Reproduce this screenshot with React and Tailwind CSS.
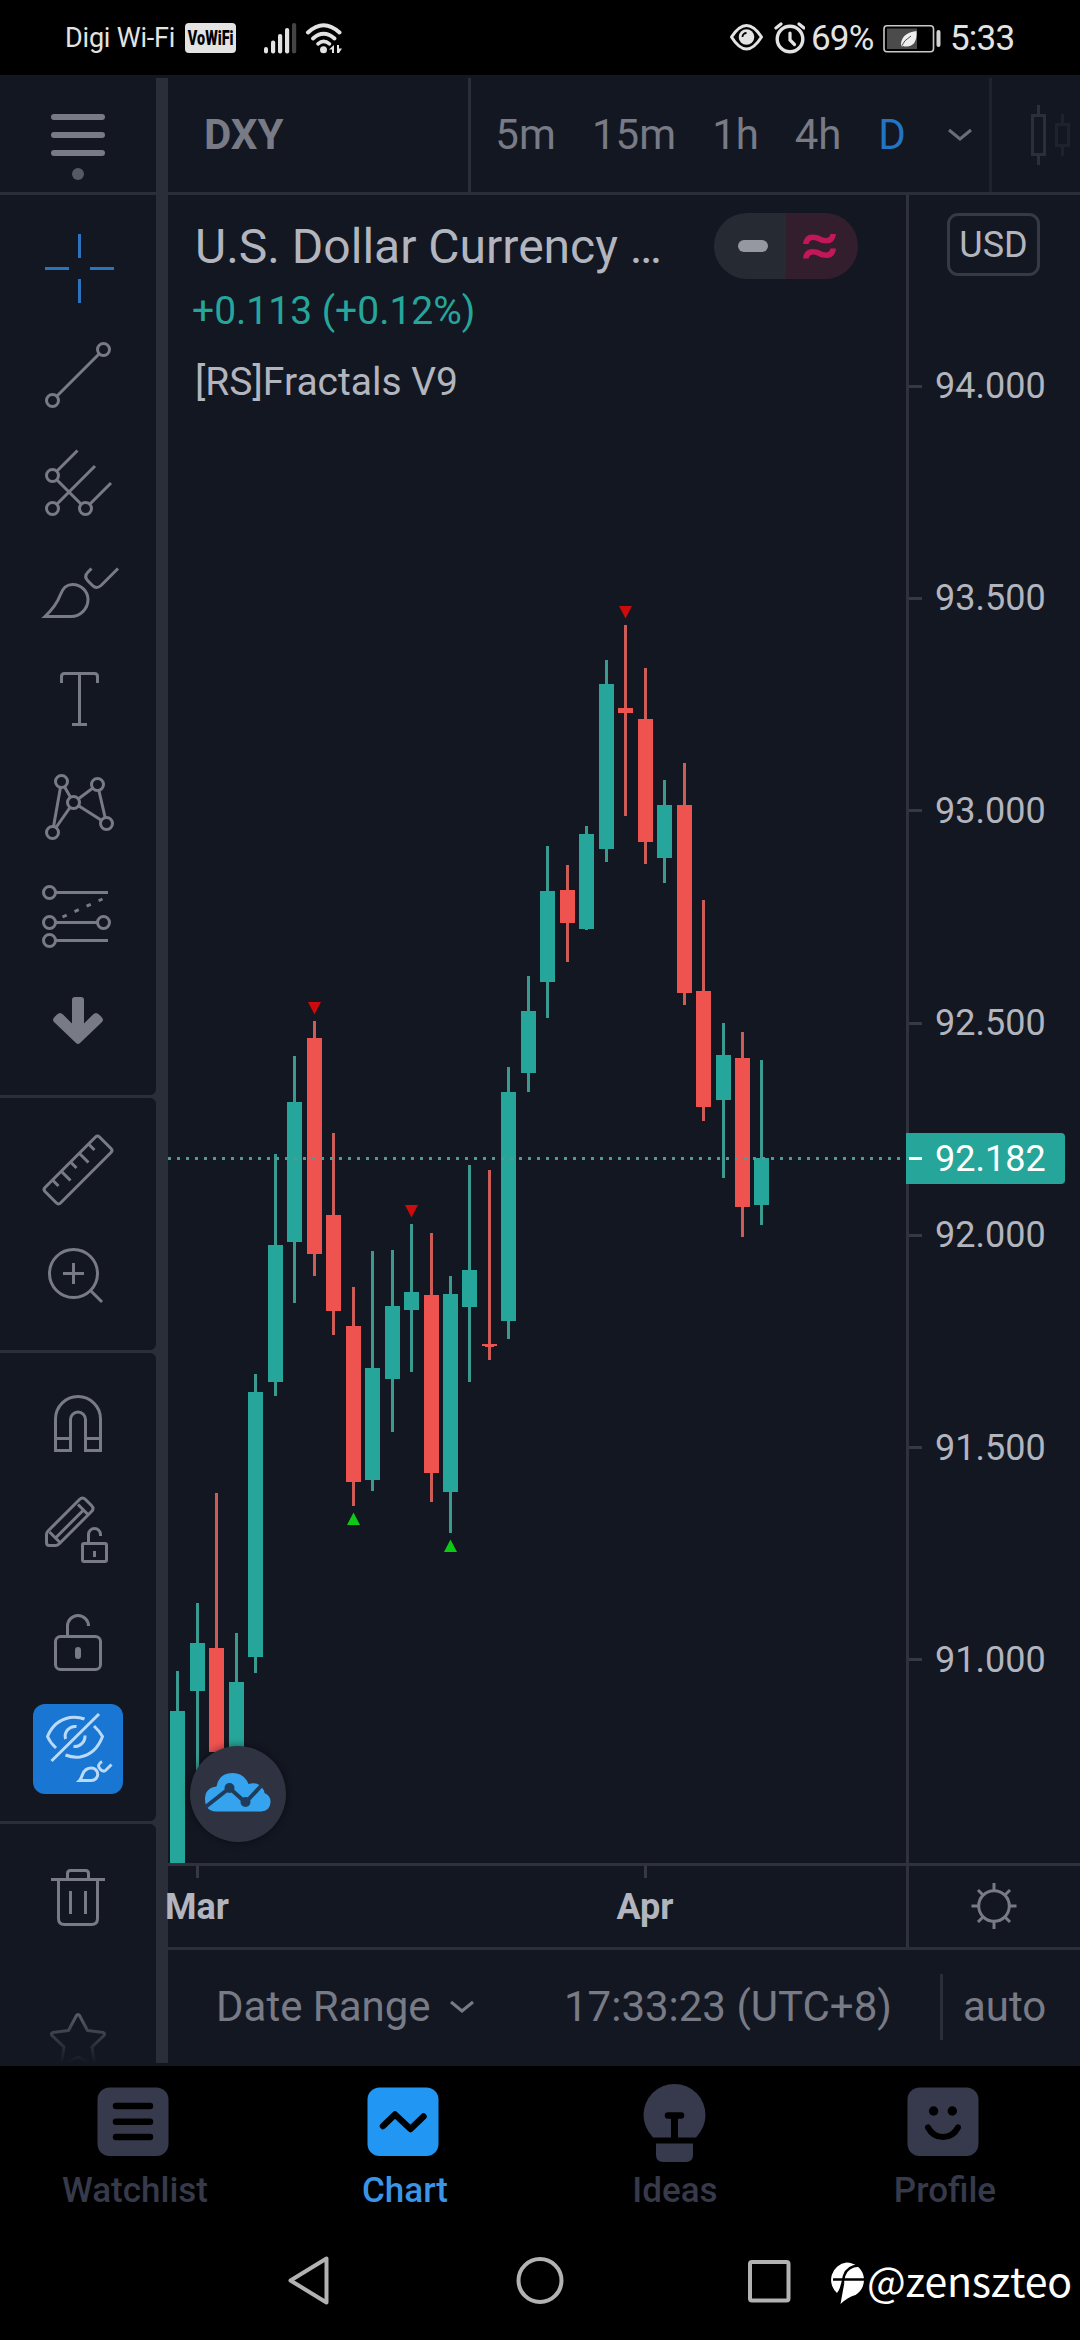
import React from "react";

const UP = "#26a69a";
const DOWN = "#ef5350";
const UP_WICK = "#3a9a90";
const DOWN_WICK = "#cd5c57";

// [body left, high, body top, body bottom, low, direction]
const CANDLES = [
  [170, 1671, 1711, 1863, 1863, 1],
  [190, 1603, 1643, 1691, 1800, 1],
  [209, 1493, 1648, 1752, 1752, 0],
  [229, 1633, 1682, 1790, 1790, 1],
  [248, 1374, 1392, 1657, 1673, 1],
  [268, 1154, 1245, 1382, 1396, 1],
  [287, 1056, 1102, 1242, 1303, 1],
  [307, 1021, 1038, 1254, 1276, 0],
  [326, 1133, 1215, 1311, 1335, 0],
  [346, 1287, 1326, 1482, 1506, 0],
  [365, 1251, 1368, 1480, 1491, 1],
  [385, 1250, 1306, 1379, 1432, 1],
  [404, 1224, 1292, 1310, 1372, 1],
  [424, 1233, 1295, 1473, 1502, 0],
  [443, 1276, 1294, 1492, 1533, 1],
  [462, 1165, 1270, 1307, 1382, 1],
  [482, 1170, 1344, 1346, 1360, 0],
  [501, 1067, 1092, 1321, 1339, 1],
  [521, 976, 1011, 1073, 1092, 1],
  [540, 846, 891, 982, 1018, 1],
  [560, 865, 890, 923, 962, 0],
  [579, 826, 834, 929, 930, 1],
  [599, 660, 684, 849, 862, 1],
  [618, 625, 708, 713, 816, 0],
  [638, 668, 719, 842, 864, 0],
  [657, 780, 805, 858, 883, 1],
  [677, 763, 805, 993, 1005, 0],
  [696, 900, 991, 1107, 1121, 0],
  [716, 1023, 1055, 1100, 1178, 1],
  [735, 1032, 1058, 1207, 1237, 0],
  [754, 1060, 1158, 1205, 1225, 1],
];

const PRICES = ["94.000", "93.500", "93.000", "92.500", "92.000", "91.500", "91.000"];

// A toolbar drawing; y and h give the slice of the toolbar it fills.
function Tool({ y, h, color = "#787b86", children }) {
  return (
    <svg
      className="block shrink-0"
      width="156"
      height={h}
      viewBox={`0 ${y} 156 ${h}`}
      fill="none"
      stroke={color}
      strokeWidth="3"
    >
      {children}
    </svg>
  );
}

function Node({ x, y }) {
  return <circle cx={x} cy={y} r="6" fill="#131722" />;
}

function StatusBar() {
  return (
    <div className="flex h-[75px] shrink-0 bg-black text-[#e3e3e3]">
      <div className="flex h-[75px] items-center pl-[65px]">
        <span className="relative top-px w-[120px] whitespace-nowrap text-[27px] leading-none tracking-[-0.2px]">Digi Wi-Fi</span>
        <span className="relative top-[0.5px] flex h-[30px] w-[51px] items-center justify-center rounded-[4px] bg-[#e3e3e3]">
          <span className="scale-x-[0.72] text-[20px] font-black leading-none text-black">VoWiFi</span>
        </span>
        <svg className="ml-[27px]" width="34" height="34" viewBox="263 20 34 34" fill="#e3e3e3">
          <rect x="264" y="46" width="4" height="6.5" rx="2" />
          <rect x="271" y="39.5" width="4.2" height="13" rx="2" />
          <rect x="278" y="33" width="4.2" height="19.5" rx="2" />
          <rect x="285" y="27" width="4.2" height="25.5" rx="2" />
          <rect x="292" y="22" width="4.2" height="30.5" rx="2" fill="#444" />
        </svg>
        <svg className="ml-[7px]" width="42" height="34" viewBox="304 20 42 34" fill="none" stroke="#e3e3e3" strokeWidth="4" strokeLinecap="round">
          <path d="M308 31.500Q323.500 17 339.500 31.500" />
          <path d="M313 37.500Q323.500 28 334.500 37.500" />
          <path d="M318 42.800Q323.500 38 329.500 42.800" strokeWidth="3.600" />
          <circle cx="323.500" cy="48.700" r="3.500" fill="#e3e3e3" stroke="none" />
          <path d="M334 44v8h-2v-3.500h-3zM337 44v8h2l3-4.500h-3v-3.500z" fill="#e3e3e3" stroke="none" />
        </svg>
      </div>
      <div className="ml-auto flex h-[75px] items-center pr-[64px]">
        <svg width="76" height="36" viewBox="729 20 76 36" fill="none" stroke="#e3e3e3">
          <path d="M731.500 37Q739 25.500 746.500 25.500T761.500 37Q754 49 746.500 49T731.500 37z" strokeWidth="3" strokeLinejoin="round" />
          <circle cx="746.500" cy="37" r="7.800" fill="#e3e3e3" stroke="none" />
          <path d="M742.500 37a4 4 0 0 1 4-4" stroke="#000" strokeWidth="1.800" />
          <circle cx="790" cy="39" r="12.800" strokeWidth="3.400" />
          <path d="M790 33v7l4.500 4.500" strokeWidth="3.200" strokeLinecap="round" />
          <path d="M776 28l5-4M804 28l-5-4" strokeWidth="3.200" strokeLinecap="round" />
        </svg>
        <span className="relative top-[1px] ml-[6px] w-[71px] whitespace-nowrap text-[35px] leading-none tracking-[-0.8px]">69%</span>
        <svg width="60" height="30" viewBox="882 22 60 30" fill="none">
          <rect x="884" y="24.700" width="49.500" height="26" rx="3" stroke="#c9c9c9" strokeWidth="1.600" />
          <rect x="887" y="27.500" width="30" height="20.500" fill="#4b4b4b" />
          <path d="M901 46q-1-14 15.500-16q1 16-11 15.500q-1 0-2-.5z" fill="#eee" />
          <path d="M901 46q3-7 10-11" stroke="#4b4b4b" strokeWidth="1" />
          <rect x="936.500" y="29" width="4" height="17" rx="2" fill="#d3d3d3" />
        </svg>
        <span className="relative top-[1px] ml-[8px] w-[66px] whitespace-nowrap text-[35px] leading-none tracking-[-0.8px]">5:33</span>
      </div>
    </div>
  );
}

function Toolbar() {
  return (
    <div className="flex w-[168px] shrink-0 flex-col gap-[3px] bg-[#2a2e39] pr-[12px]">
      <div className="h-[114px] bg-[#131722]">
        <Tool y={78} h={114}>
          <path d="M54 117h48M54 135h48M54 153h48" strokeWidth="6" strokeLinecap="round" />
          <circle cx="78" cy="174" r="6" fill="#565964" stroke="none" />
        </Tool>
      </div>
      <div className="h-[900px] rounded-br-[6px] bg-[#131722]">
        <Tool y={195} h={120} color="#2b74bd">
          <path d="M79.500 234v24M79.500 279v24M45 268.500h24M90 268.500h24" />
        </Tool>
        <Tool y={315} h={108}>
          <path d="M103.500 349.500l-51 51" />
          <Node x={103.5} y={349.5} />
          <Node x={52.5} y={400.5} />
        </Tool>
        <Tool y={423} h={108}>
          <path d="M52.500 475.500l25-25M52.500 508.500l42.500-42.500M85.500 508.500l25.500-25.500M52.500 475.500l33 33" />
          <Node x={52.5} y={475.5} />
          <Node x={52.5} y={508.5} />
          <Node x={85.5} y={508.5} />
        </Tool>
        <Tool y={531} h={108}>
          <path d="M91.500 568.500l-3.500 3.500q-4.500 4.500 0 9l4.500 4.500q4 4 8.500 0l17-17" />
          <path d="M45 616.500C53 609 58 601 60.500 594.500C63 588 66 584.500 72.500 584.500C81 584.500 88 591 88 599.500C88 609 80 616.500 71 616.500z" />
        </Tool>
        <Tool y={639} h={108}>
          <path d="M61.500 683v-6.500q0-3 3-3h30q3 0 3 3v6.500M79.500 673.500v51M72 724.500h15" />
        </Tool>
        <Tool y={747} h={108}>
          <path d="M52.500 832.500l9-51 12 21 24-18 9 39-33-21z" />
          <Node x={61.5} y={781.5} />
          <Node x={97.5} y={784.5} />
          <Node x={73.5} y={802.5} />
          <Node x={106.5} y={823.5} />
          <Node x={52.5} y={832.5} />
        </Tool>
        <Tool y={855} h={108}>
          <path d="M49.500 892.500h58.500M49.500 922.500h54M49.500 940.500h58.500" />
          <path d="M62.500 917l40-18" strokeDasharray="4.600 8.600" />
          <Node x={49.5} y={892.5} />
          <Node x={49.5} y={922.5} />
          <Node x={103.5} y={922.5} />
          <Node x={49.5} y={940.5} />
        </Tool>
        <Tool y={963} h={132}>
          <path
            d="M72 1000q0-3 3-3h6q3 0 3 3v23.500l9-9q3-3 6 0l2.500 2.500q3 3 0 5.500l-21.500 20.500q-2 2-4 0l-21.500-20.500q-3-2.500 0-5.500l2.500-2.500q3-3 6 0l9 9z"
            fill="#787b86"
            stroke="none"
          />
        </Tool>
      </div>
      <div className="h-[252px] rounded-r-[6px] bg-[#131722]">
        <Tool y={1098} h={126}>
          <path d="M95.500 1137l-50.500 50.500q-2 2 0 4l11.500 11.500q2 2 4 0l50.500-50.500q2-2 0-4l-11.500-11.500q-2-2-4 0z" />
          <path d="M53 1180.500l5.500 5.500M61.500 1171.500l9 9M71 1162.500l5.500 5.500M79.500 1153.500l9 9M89 1144.500l5.500 5.500" />
        </Tool>
        <Tool y={1224} h={126}>
          <circle cx="73.500" cy="1273.500" r="24" />
          <path d="M91 1291l11 11M63 1273.500h21M73.500 1263v21" />
        </Tool>
      </div>
      <div className="h-[468px] rounded-r-[6px] bg-[#131722]">
        <Tool y={1353} h={126}>
          <path d="M55.500 1450.500v-31.500a22.500 22.500 0 0 1 45 0v31.500h-15v-31a7.500 7.500 0 0 0-15 0v31zM55.500 1438.500h15M85.500 1438.500h15" />
        </Tool>
        <Tool y={1479} h={108}>
          <path d="M46.500 1534.500q0-2 1.500-3.500l31.500-31.500q3-3 6 0l6 6q3 3 0 6l-32.500 32.500q-1.500 1.500-3.500 1.500h-6q-3 0-3-3z" />
          <path d="M78 1504.500l10.500 10.500M49.500 1532l11.500 11.500M55.500 1538l27-27" />
          <rect x="82.500" y="1543.500" width="24" height="18" rx="1.500" />
          <path d="M88.500 1543v-8.500a6 6 0 0 1 12 0v1.500" />
          <path d="M94.500 1551v6" />
        </Tool>
        <Tool y={1587} h={117}>
          <rect x="55.500" y="1636.500" width="45" height="33" rx="5" />
          <path d="M67.500 1636v-10a10.500 10.500 0 0 1 21 0" />
          <rect x="75" y="1647" width="6" height="12" rx="3" fill="#787b86" stroke="none" />
        </Tool>
        <div className="mx-[33px] h-[90px] w-[90px] rounded-[12px] bg-[#1976d2]">
          <svg className="block" width="90" height="90" viewBox="33 1704 90 90" fill="none" stroke="#bbdaf6" strokeWidth="3">
            <path d="M84.500 1719Q78 1716.500 70 1717.500Q54 1720.500 47.500 1736.500Q50 1742.500 56 1748" />
            <path d="M94 1726Q99.500 1731 102.500 1736.500Q96 1754 80 1757Q73 1758 65.500 1755" />
            <path d="M65.500 1739a10 10 0 0 1 11-12.500M73.500 1746.500a10.500 10.500 0 0 0 11.500-11" />
            <path d="M51.500 1761l47.500-47" />
            <path d="M79.500 1780.500Q81 1779 82.500 1774.500Q85 1768 91.500 1768A6.200 6.200 0 0 1 91.500 1780.500zM102 1761.500q-6 3.500-1.500 8q3 3 5.500 0.500l5.500-5.500" />
          </svg>
        </div>
      </div>
      <div className="relative h-[239px] overflow-hidden rounded-tr-[6px] bg-[#131722]">
        <Tool y={1824} h={150}>
          <path d="M51 1879.500h54M67.500 1879v-5.500q0-3 3-3h15q3 0 3 3v5.500M58.500 1880v38.500q0 6 6 6h27q6 0 6-6v-38.500M70.500 1891v23M85.500 1891v23" />
        </Tool>
        <Tool y={1974} h={89}>
          <path
            d="M79.500 2015.500l8 15 15.500 2q2.500 1 1 3l-12 11.500 3 19-17-9-17 9 3-19-12-11.500q-1.500-2 1-3l15.500-2 8-15q1.500-2 3 0z"
            strokeLinejoin="round"
          />
        </Tool>
        <div className="absolute inset-x-0 bottom-0 h-[72px] bg-gradient-to-b from-[#13172200] to-[#131722]" />
      </div>
    </div>
  );
}

function Header() {
  return (
    <div className="flex h-[117px] shrink-0 items-center border-b-[3px] border-[#2a2e39] text-[42px] leading-none text-[#787b86]">
      <div className="flex h-full w-[303px] items-center border-r-[3px] border-[#2a2e39] pl-[36px] font-bold">DXY</div>
      <span className="w-[109px] text-center">5m</span>
      <span className="w-[108px] text-center">15m</span>
      <span className="w-[95px] text-center">1h</span>
      <span className="w-[70px] text-center">4h</span>
      <span className="w-[78px] text-center text-[#2474c4]">D</span>
      <div className="flex h-full w-[61px] items-center justify-center border-r-[3px] border-[#1f232e]">
        <svg width="26" height="14" viewBox="0 0 26 14" fill="none" stroke="#6a6d78" strokeWidth="3">
          <path d="M2 2l11 9 11-9" />
        </svg>
      </div>
      <svg className="ml-[34px]" width="54" height="66" viewBox="1026 102 54 66" fill="none" strokeWidth="3">
        <path d="M1038.500 105v10M1038.500 155v10M1032.500 115.500h12v39h-12z" stroke="#2b2f39" />
        <path d="M1062.500 114v10M1062.500 146v10M1056.500 124.500h12v21h-12z" stroke="#1e222c" />
      </svg>
    </div>
  );
}

function Plot() {
  return (
    <svg className="block" width="738" height="1668" viewBox="168 195 738 1668" shapeRendering="crispEdges">
      {CANDLES.map(([x, hi, top, bottom, lo, up]) => (
        <g key={x}>
          <rect x={x + 6} y={hi} width="3" height={lo - hi} fill={up ? UP_WICK : DOWN_WICK} />
          <rect x={x} y={top} width="15" height={bottom - top} fill={up ? UP : DOWN} />
        </g>
      ))}
      <path d="M485 1343.500h9v3h-9z" fill={DOWN} />
      <path d="M168 1158.500h738" stroke="#4d9a97" strokeWidth="3" strokeDasharray="3 6" />
      <g shapeRendering="auto">
        {[[314.5, 1002], [411.5, 1205], [625.5, 606]].map(([x, y]) => (
          <path key={x} d={`M${x - 6.5} ${y}h13l-6.500 12.500z`} fill="#cc0b0d" />
        ))}
        {[[353.5, 1525], [450.5, 1552]].map(([x, y]) => (
          <path key={x} d={`M${x - 6.5} ${y}h13l-6.500-12.500z`} fill="#0ccb12" />
        ))}
      </g>
    </svg>
  );
}

function Legend() {
  return (
    <div className="absolute left-0 top-0 flex flex-col pt-[18px] text-[#b2b5be]">
      <div className="flex h-[66px] items-center">
        <span className="relative top-px w-[546px] whitespace-nowrap pl-[27px] text-[48px] leading-none">U.S. Dollar Currency …</span>
        <div className="flex h-[66px] w-[144px] overflow-hidden rounded-[33px]">
          <div className="flex w-[72px] items-center justify-center bg-[#262a33]">
            <div className="relative left-[3px] h-[12px] w-[30px] rounded-[6px] bg-[#9598a1]" />
          </div>
          <div className="flex w-[72px] items-center justify-center bg-[#331e2e]">
            <svg className="relative -left-[3px]" width="36" height="28" viewBox="801 232 36 28" fill="#c2185b">
              <path d="M803 244Q804 234.500 812.500 234.500C819 234.500 822 238 826 238Q829.500 238 830.500 234H836Q835 243.500 826.500 243.500C820 243.500 817 240 813 240Q809.500 240 808.500 244z" />
              <path d="M803 258.500Q804 249 812.500 249C819 249 822 252.500 826 252.500Q829.500 252.500 830.500 248.500H836Q835 258 826.500 258C820 258 817 254.500 813 254.500Q809.500 254.500 808.500 258.500z" />
            </svg>
          </div>
        </div>
      </div>
      <div className="mt-[8px] flex h-[48px] items-center pl-[24px] text-[39px] leading-none text-[#26a69a]">+0.113 (+0.12%)</div>
      <div className="mt-[23px] flex h-[48px] items-center pl-[27px] text-[39px] leading-none">[RS]Fractals V9</div>
    </div>
  );
}

function PriceAxis() {
  return (
    <div className="relative w-[174px] border-l-[3px] border-[#2f323d] text-[36px] leading-none text-[#b2b5be]">
      <div className="ml-[38px] mt-[18px] flex h-[63px] w-[93px] items-center justify-center rounded-[11px] border-[3px] border-[#363a45]">USD</div>
      <div className="mt-[4px] flex flex-col">
        {PRICES.map((p) => (
          <div key={p} className="flex h-[212.300px] items-center">
            <div className="h-[3px] w-[13px] bg-[#363944]" />
            <span className="ml-[13px]">{p}</span>
          </div>
        ))}
      </div>
      <div className="absolute -left-[3px] top-[938px] flex h-[51px] w-[159px] items-center rounded-r-[4px] bg-[#26a69a] text-white">
        <div className="ml-[3px] h-[3px] w-[13px] bg-white" />
        <span className="ml-[13px]">92.182</span>
      </div>
    </div>
  );
}

function TimeAxis() {
  return (
    <div className="flex h-[84px] shrink-0 border-t-[3px] border-[#2f323d] text-[36px] font-bold leading-none text-[#b2b5be]">
      <div className="flex w-[738px]">
        <div className="-ml-[71px] flex w-[200px] flex-col items-center">
          <div className="h-[12px] w-[3px] bg-[#363944]" />
          <span className="mt-[11px]">Mar</span>
        </div>
        <div className="ml-[247px] flex w-[202px] flex-col items-center">
          <div className="h-[12px] w-[3px] bg-[#363944]" />
          <span className="mt-[11px]">Apr</span>
        </div>
      </div>
      <div className="flex flex-1 items-center justify-center border-l-[3px] border-[#2f323d]">
        <svg className="relative -left-[1px] -top-px" width="48" height="48" viewBox="-24 -24 48 48" fill="none" stroke="#787b86" strokeWidth="3">
          <circle r="15.300" />
          <path d="M0-23v7M0 16v7M-22.500 0h7M15.500 0h7M-16-16l5 5M16-16l-5 5M-16 16l5-5M16 16l-5-5" />
        </svg>
      </div>
    </div>
  );
}

function Footer() {
  return (
    <div className="flex h-[116px] shrink-0 items-center border-t-[3px] border-[#2a2e39] text-[42px] leading-none text-[#787b86]">
      <span className="ml-[48px] w-[233px] whitespace-nowrap">Date Range</span>
      <svg width="26" height="14" viewBox="0 0 26 14" fill="none" stroke="#787b86" strokeWidth="3">
        <path d="M2 2l11 9 11-9" />
      </svg>
      <span className="ml-[89px] w-[376px] whitespace-nowrap">17:33:23 (UTC+8)</span>
      <div className="h-[66px] w-[3px] bg-[#2a2e39]" />
      <span className="ml-[20px]">auto</span>
    </div>
  );
}

function Chart() {
  return (
    <div className="flex w-[912px] flex-col">
      <Header />
      <div className="relative flex h-[1668px]">
        <Plot />
        <Legend />
        <div className="absolute left-[22px] top-[1551px] flex h-[96px] w-[96px] items-center justify-center rounded-full bg-[#2f3241] shadow-[0_0_6px_2px_rgba(0,0,0,0.3)]">
          <svg className="relative -top-[2px]" width="68" height="42" viewBox="205 1771 68 42" fill="none">
            <path d="M206 1799Q206 1788 217.500 1786.500Q220 1773 233.500 1773Q245 1773 249.500 1784Q260 1781 265 1790.500L265.500 1793Q272 1796 271.500 1802.500Q271 1811 262 1811.500H217Q206 1811 206 1799z" fill="#36a3ee" />
            <path d="M206.500 1807l24-19 16 14.500 16-17" stroke="#1f3c5a" strokeWidth="4" />
            <circle cx="230.500" cy="1788" r="5" fill="#1f3c5a" />
            <circle cx="246.500" cy="1802" r="5" fill="#1f3c5a" />
          </svg>
        </div>
        <PriceAxis />
      </div>
      <TimeAxis />
      <Footer />
    </div>
  );
}

function Tab({ x, label, active, children }) {
  return (
    <div className={active ? "flex w-[270px] flex-col items-center text-[#3a95e6]" : "flex w-[270px] flex-col items-center text-[#363a4a]"}>
      <svg className="mt-[14px] block" width="96" height="90" viewBox={`${x - 46} 2080 96 90`}>
        {children}
      </svg>
      <span className="mt-[3px] text-[35px] font-medium leading-none">{label}</span>
    </div>
  );
}

function Tabs() {
  return (
    <div className="flex h-[154px] shrink-0">
      <Tab x={133} label="Watchlist">
        <rect x="97.500" y="2087.500" width="71" height="68.500" rx="12" fill="#363a4c" />
        <path d="M116 2106h34M116 2121.700h34M116 2137h34" stroke="#000" strokeWidth="6.500" strokeLinecap="round" />
      </Tab>
      <Tab x={403} label="Chart" active>
        <rect x="367.500" y="2087.500" width="71" height="68.500" rx="12" fill="#2196f3" />
        <path d="M383 2126l12-11.500 15.500 14.500 13-12.500" stroke="#000" strokeWidth="6.500" strokeLinecap="round" strokeLinejoin="round" fill="none" />
      </Tab>
      <Tab x={673} label="Ideas">
        <path d="M653 2137.500Q643.500 2127 643.500 2115A31 31 0 0 1 705.500 2115Q705.500 2127 696 2137.500z" fill="#363a4c" />
        <path d="M656 2143.500h37v11.500q0 7-7 7h-23q-7 0-7-7z" fill="#363a4c" />
        <path d="M668 2115.500h13" stroke="#000" strokeWidth="6.500" strokeLinecap="round" />
        <path d="M674.500 2116v24" stroke="#000" strokeWidth="7" />
      </Tab>
      <Tab x={943} label="Profile">
        <rect x="907.500" y="2087.500" width="71" height="68.500" rx="12" fill="#363a4c" />
        <circle cx="933.600" cy="2111" r="4.700" />
        <circle cx="952.300" cy="2111" r="4.700" />
        <path d="M928 2127.500Q933 2137 943 2137T958 2127.500" stroke="#000" strokeWidth="6" strokeLinecap="round" fill="none" />
      </Tab>
    </div>
  );
}

function SystemNav() {
  return (
    <div className="flex h-[120px] items-center">
      <svg className="ml-[284px]" width="48" height="52" viewBox="284 2254 48 52" fill="none" stroke="#b2b2b2" strokeWidth="4" strokeLinejoin="round">
        <path d="M290.500 2280.500l36-22v44z" />
      </svg>
      <svg className="ml-[182px]" width="52" height="52" viewBox="514 2254 52 52" fill="none" stroke="#b2b2b2" strokeWidth="4">
        <circle cx="540" cy="2280.500" r="21.500" />
      </svg>
      <svg className="ml-[177px]" width="52" height="52" viewBox="743 2254 52 52" fill="none" stroke="#b2b2b2" strokeWidth="4">
        <rect x="750" y="2262" width="38.500" height="38.500" rx="2" />
      </svg>
      <svg className="relative top-[2px] ml-[32px]" width="39" height="48" viewBox="827 2258 39 48">
        <path d="M846.500 2262.500a17.500 17.500 0 0 1 9 32.500Q848 2297 840.500 2304L844.500 2282L837 2293A17.500 17.500 0 0 1 846.500 2262.500z" fill="#fff" />
        <path d="M838 2296Q842.500 2286 844 2276Q847 2266 859 2265.500M833 2279.500h32" stroke="#000" strokeWidth="2.500" fill="none" />
      </svg>
      <span className="relative -top-px ml-[1px] whitespace-nowrap font-['Noto_Sans_CJK_SC',sans-serif] text-[41px] leading-none tracking-[-0.2px] text-white">@zenszteo</span>
    </div>
  );
}

export default function App() {
  return (
    <div className="flex h-[2340px] w-[1080px] flex-col overflow-hidden bg-black font-[Roboto,sans-serif]">
      <StatusBar />
      <div className="flex h-[1991px] shrink-0 bg-[#131722] py-[3px]">
        <Toolbar />
        <Chart />
      </div>
      <Tabs />
      <SystemNav />
    </div>
  );
}
